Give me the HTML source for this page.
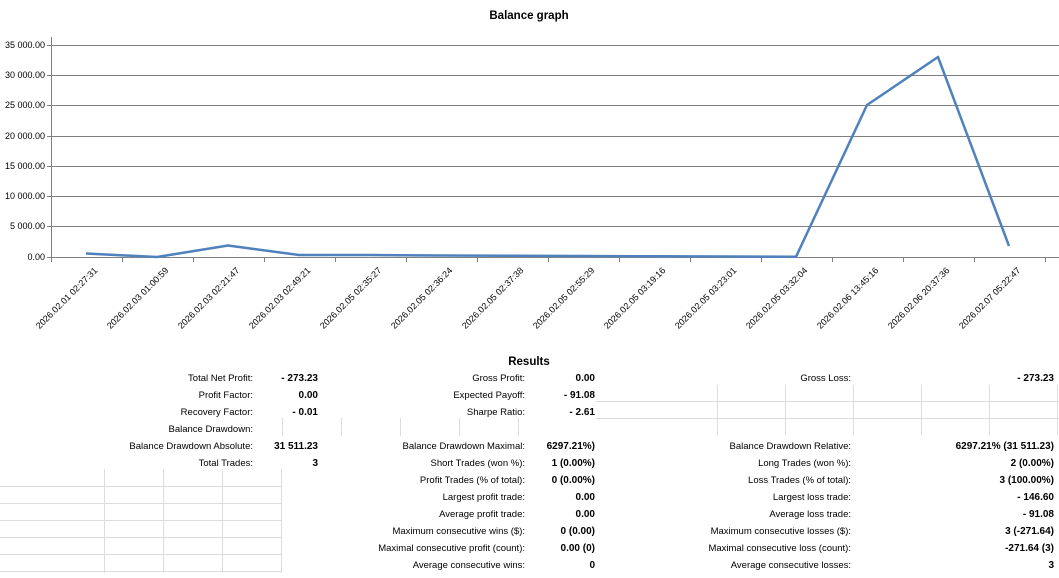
<!DOCTYPE html>
<html><head><meta charset="utf-8"><style>
body{margin:0;width:1059px;height:573px;background:#fff;overflow:hidden;font-family:"Liberation Sans",sans-serif}
svg text{font-family:"Liberation Sans",sans-serif}
</style></head><body>
<svg width="1059" height="573" viewBox="0 0 1059 573" xmlns="http://www.w3.org/2000/svg">
<text x="529" y="19" text-anchor="middle" font-size="11.5" font-weight="bold" fill="#000">Balance graph</text>
<g stroke="#808080" stroke-width="1">
<line x1="47" y1="45.5" x2="1059" y2="45.5"/>
<line x1="47" y1="75.5" x2="1059" y2="75.5"/>
<line x1="47" y1="105.5" x2="1059" y2="105.5"/>
<line x1="47" y1="136.5" x2="1059" y2="136.5"/>
<line x1="47" y1="166.5" x2="1059" y2="166.5"/>
<line x1="47" y1="196.5" x2="1059" y2="196.5"/>
<line x1="47" y1="226.5" x2="1059" y2="226.5"/>
<line x1="47" y1="257.5" x2="1059" y2="257.5"/>
<line x1="51.5" y1="37" x2="51.5" y2="262"/>
</g>
<g stroke="#808080"><path d="M51.5 257v5M122.5 257v5M193.5 257v5M264.5 257v5M335.5 257v5M406.5 257v5M477.5 257v5M548.5 257v5M619.5 257v5M690.5 257v5M761.5 257v5M832.5 257v5M903.5 257v5M974.5 257v5M1045.5 257v5"/></g>
<g font-size="9" fill="#000" text-anchor="end">
<text x="45" y="48">35 000.00</text><text x="45" y="78">30 000.00</text><text x="45" y="108">25 000.00</text><text x="45" y="139">20 000.00</text><text x="45" y="169">15 000.00</text><text x="45" y="199">10 000.00</text><text x="45" y="229">5 000.00</text><text x="45" y="260">0.00</text>
</g>
<polyline fill="none" stroke="#4f81bd" stroke-width="2.5" stroke-linejoin="round" points="86,253.5 157,257 228,245.5 299,255 370,255 441,255.5 512,255.8 583,256 654,256.3 725,256.5 796,256.8 867,105 938,57 1009,246"/>
<g font-size="9" fill="#000" text-anchor="end">
<text transform="translate(98,271) rotate(-45)">2026.02.01 02:27:31</text>
<text transform="translate(169,271) rotate(-45)">2026.02.03 01:00:59</text>
<text transform="translate(240,271) rotate(-45)">2026.02.03 02:21:47</text>
<text transform="translate(311,271) rotate(-45)">2026.02.03 02:49:21</text>
<text transform="translate(382,271) rotate(-45)">2026.02.05 02:35:27</text>
<text transform="translate(453,271) rotate(-45)">2026.02.05 02:36:24</text>
<text transform="translate(524,271) rotate(-45)">2026.02.05 02:37:38</text>
<text transform="translate(595,271) rotate(-45)">2026.02.05 02:55:29</text>
<text transform="translate(666,271) rotate(-45)">2026.02.05 03:19:16</text>
<text transform="translate(737,271) rotate(-45)">2026.02.05 03:23:01</text>
<text transform="translate(808,271) rotate(-45)">2026.02.05 03:32:04</text>
<text transform="translate(879,271) rotate(-45)">2026.02.06 13:45:16</text>
<text transform="translate(950,271) rotate(-45)">2026.02.06 20:37:36</text>
<text transform="translate(1021,271) rotate(-45)">2026.02.07 05:22:47</text>
</g>
<g stroke="#dcdcdc" stroke-width="1">
<path d="M0 486.5H281M0 503.5H281M0 520.5H281M0 537.5H281M0 554.5H281M0 571.5H281M104.5 469V573M163.5 469V573M222.5 469V573M281.5 469V573"/>
<path d="M596 401.5H1059M596 418.5H1059M717.5 385V435M785.5 385V435M853.5 385V435M921.5 385V435M989.5 385V435M1057.5 385V435"/>
<path d="M282.5 418V436M341.5 418V436M400.5 418V436M459.5 418V436M518.5 418V436"/>
</g>
<text x="529" y="365" text-anchor="middle" font-size="11.5" font-weight="bold" fill="#000">Results</text>
<g font-size="9.5" fill="#000">
<g text-anchor="end">
<text x="253" y="381">Total Net Profit:</text><text x="253" y="398">Profit Factor:</text><text x="253" y="415">Recovery Factor:</text><text x="253" y="432">Balance Drawdown:</text><text x="253" y="449">Balance Drawdown Absolute:</text><text x="253" y="466">Total Trades:</text>
<text x="525" y="381">Gross Profit:</text><text x="525" y="398">Expected Payoff:</text><text x="525" y="415">Sharpe Ratio:</text><text x="525" y="449">Balance Drawdown Maximal:</text><text x="525" y="466">Short Trades (won %):</text><text x="525" y="483">Profit Trades (% of total):</text><text x="525" y="500">Largest profit trade:</text><text x="525" y="517">Average profit trade:</text><text x="525" y="534">Maximum consecutive wins ($):</text><text x="525" y="551">Maximal consecutive profit (count):</text><text x="525" y="568">Average consecutive wins:</text>
<text x="851" y="381">Gross Loss:</text><text x="851" y="449">Balance Drawdown Relative:</text><text x="851" y="466">Long Trades (won %):</text><text x="851" y="483">Loss Trades (% of total):</text><text x="851" y="500">Largest loss trade:</text><text x="851" y="517">Average loss trade:</text><text x="851" y="534">Maximum consecutive losses ($):</text><text x="851" y="551">Maximal consecutive loss (count):</text><text x="851" y="568">Average consecutive losses:</text>
</g>
<g text-anchor="end" font-weight="bold" font-size="10">
<text x="318" y="381">- 273.23</text><text x="318" y="398">0.00</text><text x="318" y="415">- 0.01</text><text x="318" y="449">31 511.23</text><text x="318" y="466">3</text>
<text x="595" y="381">0.00</text><text x="595" y="398">- 91.08</text><text x="595" y="415">- 2.61</text><text x="595" y="449">6297.21%)</text><text x="595" y="466">1 (0.00%)</text><text x="595" y="483">0 (0.00%)</text><text x="595" y="500">0.00</text><text x="595" y="517">0.00</text><text x="595" y="534">0 (0.00)</text><text x="595" y="551">0.00 (0)</text><text x="595" y="568">0</text>
<text x="1054" y="381">- 273.23</text><text x="1054" y="449">6297.21% (31 511.23)</text><text x="1054" y="466">2 (0.00%)</text><text x="1054" y="483">3 (100.00%)</text><text x="1054" y="500">- 146.60</text><text x="1054" y="517">- 91.08</text><text x="1054" y="534">3 (-271.64)</text><text x="1054" y="551">-271.64 (3)</text><text x="1054" y="568">3</text>
</g>
</g>
</svg>
</body></html>
